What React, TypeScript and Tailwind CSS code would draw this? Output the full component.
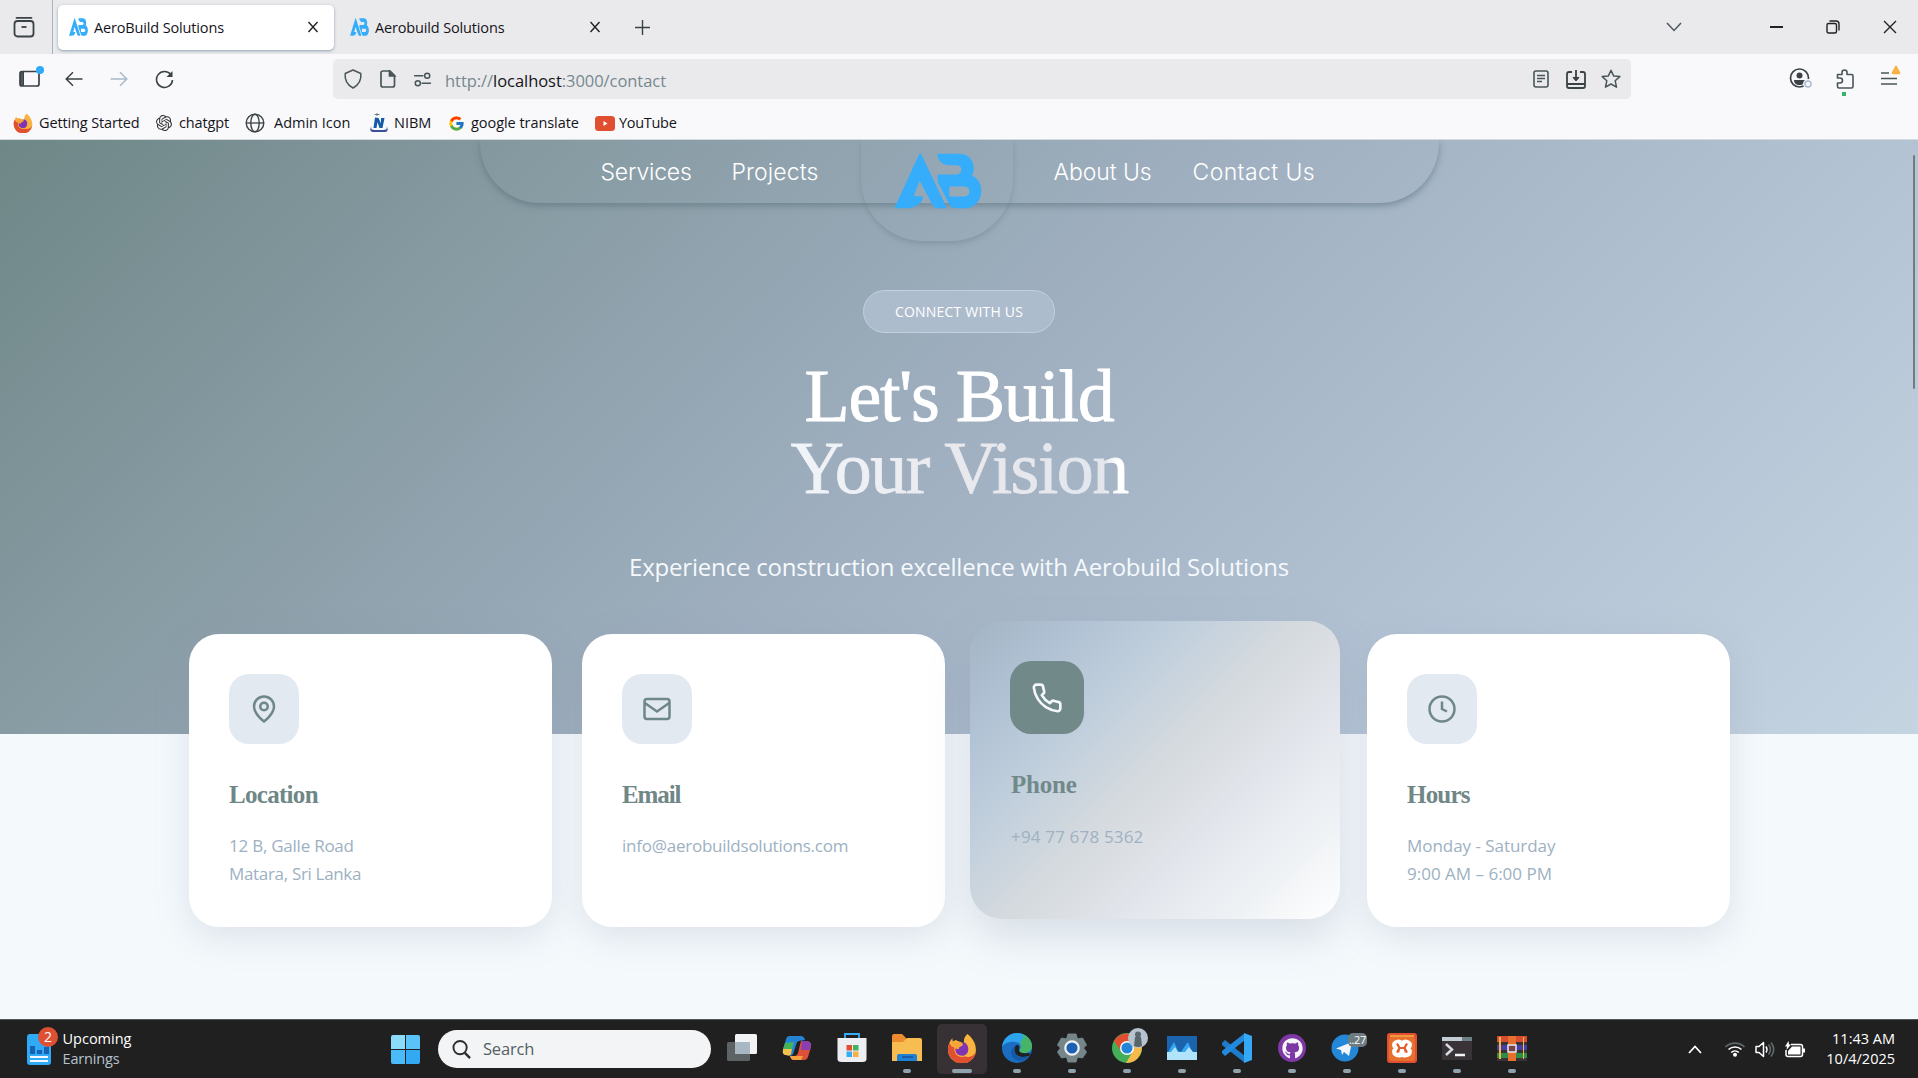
import type { ReactNode } from "react";
import { SiOpenai } from "react-icons/si";
import { FcGoogle } from "react-icons/fc";
import { FaGithub } from "react-icons/fa";

function BrandMark({ className }: { className: string }) {
  return (
    <svg viewBox="1274 56 264 166" preserveAspectRatio="none" className={className} fill="#36adfb">
      <path d="M1351 57 L1276 217 Q1276 220 1280 220 H1312 C1340 218 1361 204 1361 184 H1333 L1351 138 L1387 206 C1393 217 1400 220 1410 220 H1430 Q1433 219 1431 215 L1357 62 Q1354 57 1351 57Z" />
      <path
        fillRule="evenodd"
        d="M1404 58 H1470 C1500 58 1513 80 1513 102 C1513 113 1511 118 1507 122 C1525 130 1536 146 1536 168 C1536 198 1515 220 1486 220 H1460 C1450 220 1444 216 1440 208 L1405 142 V120 H1462 Q1476 119 1476 106 Q1476 92 1462 92 H1440 C1418 92 1404 76 1404 58Z M1440 155 V185 H1484 Q1500 184 1500 170 Q1500 155 1484 155Z"
      />
    </svg>
  );
}

function FirefoxLogo({ className }: { className: string }) {
  return (
    <svg viewBox="0 0 28 28" className={className}>
      <path d="M19 1 C23 4 27 9 27 16 A13 12.4 0 0 1 1 16 C1 11 3 7 5 5 C5 7 5.500 8 6 8 C8 6 9 7 11 8 C13 8 15 10 16 9 C15 6 17 3 19 1Z" fill="#f9b440" />
      <path d="M1 14 A13 13 0 0 0 27 17 C25 22 20 23 17 22 C10 24 6 19 7 13 C5 13 3 12 3 9 C2 10 1 12 1 14Z" fill="#e1502f" />
      <path d="M8 14 C9 10 12 9 17 9 C21 12 21 19 16 21 C11 22 7 19 8 14Z" fill="#8033b3" />
      <path d="M4 7 C7 9 10 8 15 10 C15 13 11 12 11 15 C7 15 4 12 4 7Z" fill="#f7a53a" />
    </svg>
  );
}

function TabItem({ title, active, className }: { title: string; active?: boolean; className: string }) {
  return (
    <div
      className={`flex h-[45px] items-center rounded-[5px] pl-[11px] ${active ? "bg-white shadow-[0_1px_3px_rgba(110,135,155,0.75)]" : ""} ${className}`}
    >
      <BrandMark className="h-[18px] w-[19px]" />
      <span className="ml-[6px] flex-1 whitespace-nowrap pt-px text-[14.5px] tracking-[-0.15px] text-[#15141a]">{title}</span>
      <svg viewBox="0 0 12 12" className="mr-[15px] size-3 stroke-[#222] stroke-[1.4]">
        <path d="M1.500 1 10.500 11 M10.500 1 1.500 11" />
      </svg>
    </div>
  );
}

function TabStrip() {
  return (
    <header className="flex h-[54px] items-center bg-[#eaeaec]">
      <div className="flex h-full w-[53px] items-center justify-center border-r border-[#a8b5c0] pr-1">
        <svg viewBox="0 0 22 22" className="size-[22px] fill-none stroke-[#3b4246] stroke-[1.8]">
          <path d="M3.500 1.800h15" strokeLinecap="round" />
          <rect x="1.500" y="5" width="19" height="15.500" rx="3" />
          <path d="M8.500 11h5" />
        </svg>
      </div>
      <TabItem title="AeroBuild Solutions" active className="ml-[5px] w-[276px]" />
      <TabItem title="Aerobuild Solutions" className="ml-[5px] w-[277px]" />
      <svg viewBox="0 0 14 14" className="ml-[19px] size-[15px] stroke-[#3b4246] stroke-[1.3]">
        <path d="M7 0v14M0 7h14" />
      </svg>
      <div className="flex-1" />
      <svg viewBox="0 0 16 10" className="mr-[88px] h-[10px] w-4 fill-none stroke-[#4c5a60] stroke-[1.5]">
        <path d="M1 1l7 7.500L15 1" />
      </svg>
      <div className="mr-[43px] h-[1.500px] w-[13px] bg-[#222]" />
      <svg viewBox="0 0 14 14" className="mr-[43px] size-[14px] fill-none stroke-[#222] stroke-[1.4]">
        <rect x="1" y="3.500" width="9.500" height="9.500" rx="1.500" />
        <path d="M3.500 1h6.500q3 0 3 3v6.500" />
      </svg>
      <svg viewBox="0 0 14 14" className="mr-[21px] size-[14px] stroke-[#222] stroke-[1.4]">
        <path d="M1 1l12 12M13 1L1 13" />
      </svg>
    </header>
  );
}

function AddressBar() {
  return (
    <div className="flex h-[40px] w-[1298px] items-center rounded-[5px] bg-[#eaeaec] pl-[10px] pr-[10px] text-[#4a5558]">
      <svg viewBox="0 0 20 20" className="h-5 w-5 fill-none stroke-current stroke-[1.5]">
        <path d="M10 1 L17.800 4.500 C18.500 11 15.500 16 10 19 C4.500 16 1.500 11 2.200 4.500Z" strokeLinejoin="round" />
      </svg>
      <svg viewBox="0 0 18 18" className="ml-4 h-[18px] w-[18px] fill-none stroke-current stroke-[1.7]">
        <path d="M11 1H4Q2 1 2 3v12q0 2 2 2h9.500q2 0 2-2V5.500Z" />
        <path d="M10.500 1v5h5z" fill="currentColor" />
      </svg>
      <svg viewBox="0 0 20 16" className="ml-[16px] h-[15px] w-[19px] fill-none stroke-current stroke-[1.6]">
        <path d="M1 4h10M9 12h10" />
        <circle cx="15" cy="4" r="2.700" />
        <circle cx="5" cy="12" r="2.700" />
      </svg>
      <p className="ml-[13px] flex-1 pt-[3px] text-[16.5px] leading-5 tracking-[-0.05px] text-[#76888e]">
        http://<span className="text-[#15141a]">localhost</span>:3000/contact
      </p>
      <svg viewBox="0 0 16 18" className="h-[18px] w-4 fill-none stroke-current stroke-[1.6]">
        <rect x="1" y="1" width="14" height="16" rx="2" />
        <path d="M4 5.500h8M4 8.500h8M4 11.500h5" strokeWidth="1.300" />
      </svg>
      <svg viewBox="0 0 20 19" className="ml-[17px] h-[19px] w-5 fill-none stroke-[#3a4245] stroke-[1.8]">
        <path d="M6 2H3Q1 2 1 4v12q0 2 2 2h14q2 0 2-2V4q0-2-2-2h-3M1 14h18M10 0v9" />
        <path d="M7 7.500h6l-3 3.500z" fill="#3a4245" strokeWidth="1" />
      </svg>
      <svg viewBox="0 0 20 20" className="ml-[15px] h-5 w-5 fill-none stroke-current stroke-[1.5]" strokeLinejoin="round">
        <path d="M10 1.200l2.600 5.700 6.200.7-4.600 4.200 1.300 6.400L10 15l-5.500 3.200 1.300-6.400L1.200 7.600l6.200-.7z" />
      </svg>
    </div>
  );
}

function Toolbar() {
  return (
    <div className="flex h-[50px] items-center text-[#3b4246]">
      <div className="relative ml-[19px] h-[18px] w-[21px]">
        <svg viewBox="0 0 21 18" className="h-full w-full fill-none stroke-current stroke-[1.7]">
          <rect x="1" y="1.500" width="19" height="14.500" rx="2" />
          <path d="M1.500 2h3v13.500h-3z" fill="#4f5a5f" strokeWidth="1" />
        </svg>
        <span className="absolute -right-[4px] -top-[4px] size-2 rounded-full bg-[#2eaaf8]" />
      </div>
      <svg viewBox="0 0 18 16" className="ml-[25px] h-4 w-[18px] fill-none stroke-current stroke-[1.5]">
        <path d="M17.500 8H1.500M8 1.200L1.200 8 8 14.800" />
      </svg>
      <svg viewBox="0 0 18 16" className="ml-[27px] h-4 w-[18px] fill-none stroke-[#a9b9c8] stroke-[1.5]">
        <path d="M.5 8h16M10 1.200L16.800 8 10 14.800" />
      </svg>
      <svg viewBox="0 0 19 19" className="ml-[27px] h-[19px] w-[19px] fill-none stroke-current stroke-[1.6]">
        <path d="M16 4.800A8 8 0 1 0 17.500 10" />
        <path d="M17.500 1v6h-6z" fill="currentColor" stroke="none" />
      </svg>
      <div className="ml-[159px]">
        <AddressBar />
      </div>
      <div className="flex-1" />
      <svg viewBox="0 0 24 22" className="mr-[23px] h-[22px] w-6">
        <circle cx="10.500" cy="10" r="9" fill="none" stroke="#3b4246" strokeWidth="1.700" />
        <circle cx="10.500" cy="7.500" r="3" fill="#3b4246" />
        <path d="M5 12h11c0 3-2 5-5.500 5S5 15 5 12z" fill="#3b4246" />
        <circle cx="19" cy="16" r="5" fill="#f9f9fb" />
        <circle cx="19" cy="16" r="3" fill="none" stroke="#aabbd0" strokeWidth="1.500" />
      </svg>
      <div className="relative mr-[27px] h-5 w-[18px]">
        <svg viewBox="0 0 18 20" className="h-full w-full fill-none stroke-[#4a5558] stroke-[1.6]" strokeLinejoin="round">
          <path d="M1.500 5.500H6V3.500a2.500 2.500 0 0 1 5 0v2h4.500q1.500 0 1.500 1.500v10.500q0 1.500-1.500 1.500H3q-1.500 0-1.500-1.500V14H4a2.200 2.200 0 0 0 0-5H1.500z" />
        </svg>
        <span className="absolute left-[6px] top-[23px] h-1 w-1 bg-[#35b46a]" />
      </div>
      <div className="relative mr-[21px] h-5 w-4">
        <svg viewBox="0 0 16 20" className="h-full w-full stroke-[#4a5558] stroke-[1.6]">
          <path d="M0 4h8M0 9.500h16M0 15h16" />
        </svg>
        <svg viewBox="0 0 12 10" className="absolute -right-[4px] -top-[4px] h-[10px] w-[10px]">
          <path d="M6 0q1 0 1.500 1L11 8q.8 2-1 2H2q-1.800 0-1-2L4.500 1Q5 0 6 0z" fill="#f7b243" />
        </svg>
      </div>
    </div>
  );
}

function Bookmarks() {
  return (
    <div className="flex h-[35px] items-center whitespace-nowrap pl-[13px] pt-[3px] text-[14.5px] text-[#15141a]">
      <FirefoxLogo className="mr-[6px] size-5" />
      <span className="w-[117px] tracking-[-0.13px]">Getting Started</span>
      <SiOpenai className="mr-[7px] size-[16px] text-[#333]" />
      <span className="w-[66px] tracking-[-0.13px]">chatgpt</span>
      <svg viewBox="0 0 20 20" className="mr-[9px] size-5 fill-none stroke-[#3b4246] stroke-[1.4]">
        <circle cx="10" cy="10" r="8.800" />
        <ellipse cx="10" cy="10" rx="4.200" ry="8.800" />
        <path d="M1 10h18" strokeWidth="1.300" />
      </svg>
      <span className="w-[95px]">Admin Icon</span>
      <svg viewBox="0 0 20 20" className="mr-[5px] size-5">
        <path d="M6 4.500l3.500.5 2.500 5.500V5h3.500l-2 10h-3L8.500 9l-1 6H4.500z" fill="#1559a8" />
        <path d="M2.500 13q-1.500 4 3 4h9q4.500 0 3-4q3.500 6-3 6h-9q-6.500 0-3-6z" fill="#3b4f9a" />
        <path d="M8 0v3M5.500 1.500h5" stroke="#66808a" />
      </svg>
      <span className="w-[54px]">NIBM</span>
      <FcGoogle className="mr-[6px] size-[17px]" />
      <span className="w-[124px] tracking-[-0.05px]">google translate</span>
      <svg viewBox="0 0 20 15" className="mr-[4px] h-[15px] w-5">
        <rect width="20" height="15" rx="3.500" fill="#df4f30" />
        <path d="M8.500 5l4 2.500-4 2.500z" fill="#fff" />
      </svg>
      <span className="tracking-[-0.3px]">YouTube</span>
    </div>
  );
}

function NavBar() {
  return (
    <nav className="relative mx-auto flex h-[63px] w-[959px] rounded-b-[60px] text-left text-[23px] font-light leading-[64px] text-white shadow-[0_3px_6px_rgba(80,105,115,0.5)] [clip-path:inset(0_-20px_-60px_-20px)] font-['Inter',sans-serif]">
      <a className="ml-[121px] w-[131px] tracking-[-0.2px]">Services</a>
      <a className="w-[322px] tracking-[0.12px]">Projects</a>
      <a className="w-[139px] tracking-[-0.07px]">About Us</a>
      <a className="whitespace-nowrap tracking-[0.4px]">Contact Us</a>
      <div className="absolute left-[381px] top-0 h-[101px] w-[152px] rounded-b-[62px] shadow-[0_3px_5px_rgba(100,120,130,0.35)]">
        <BrandMark className="ml-[33px] mt-[13px] h-[56px] w-[88px]" />
      </div>
    </nav>
  );
}

function Hero() {
  return (
    <section className="h-[594px] bg-[linear-gradient(135deg,#6f8787_0%,#889ca4_24%,#9fafc0_49%,#b3c3d4_76%,#c5d4e1_100%)] text-center text-white">
      <NavBar />
      <div className="mx-auto mt-[87px] h-[43px] w-[192px] rounded-full border border-[#c3d0de] bg-[#adbccd] text-[14px] font-medium leading-[41px] tracking-[0.2px]">
        CONNECT WITH US
      </div>
      <h1 className="mt-[27px] font-['Liberation_Serif',serif] text-[74px] leading-[72px]">
        <span className="block tracking-[-1.35px] [-webkit-text-stroke:0.8px_white]">Let&apos;s Build</span>
        <span className="mx-auto block w-[343px] whitespace-nowrap bg-[linear-gradient(90deg,#f0f5f9_0%,#e9e9ed_50%,#e3e6ed_92%,#ffffff_96%)] bg-clip-text tracking-[-1.6px] text-transparent [-webkit-text-stroke:0.8px_transparent]">
          Your Vision
        </span>
      </h1>
      <p className="mt-[45px] text-[24px] leading-[36px] tracking-[-0.2px] text-[#f5f9fc]">
        Experience construction excellence with Aerobuild Solutions
      </p>
    </section>
  );
}

function InfoCard({ icon, title, titleClass, children }: { icon: ReactNode; title: string; titleClass: string; children: ReactNode }) {
  return (
    <article className="h-[293px] w-[363px] rounded-[30px] bg-white pl-10 pt-10 shadow-[0_10px_35px_rgba(130,140,165,0.2)]">
      <div className="flex size-[70px] items-center justify-center rounded-[20px] bg-[#e2e9f1]">{icon}</div>
      <h3 className={`mt-[36px] font-['Liberation_Serif',serif] text-[25px] font-bold leading-[30px] text-[#6f8786] ${titleClass}`}>{title}</h3>
      <div className="mt-[22px] text-[17px] leading-[28px] text-[#9db1c2]">{children}</div>
    </article>
  );
}

const lineIcon = "size-[30px] fill-none stroke-[#6f8786] stroke-2";

function ContactCards() {
  return (
    <section className="relative -mt-[100px] flex items-start pl-[189px]">
      <InfoCard
        title="Location"
        titleClass="tracking-[-0.7px]"
        icon={
          <svg viewBox="0 0 24 24" className={lineIcon} strokeLinejoin="round">
            <path d="M20 10c0 6-8 12-8 12s-8-6-8-12a8 8 0 0 1 16 0Z" />
            <circle cx="12" cy="10" r="3" />
          </svg>
        }
      >
        <p className="tracking-[-0.24px]">12 B, Galle Road</p>
        <p className="tracking-[-0.32px]">Matara, Sri Lanka</p>
      </InfoCard>
      <div className="ml-[30px]">
        <InfoCard
          title="Email"
          titleClass="tracking-[-1.1px]"
          icon={
            <svg viewBox="0 0 24 24" className={lineIcon} strokeLinejoin="round">
              <rect x="2" y="4" width="20" height="16" rx="2" />
              <path d="M2 7l10 7 10-7" />
            </svg>
          }
        >
          <p className="tracking-[-0.24px]">info@aerobuildsolutions.com</p>
        </InfoCard>
      </div>
      <article className="-mt-[13px] ml-[25px] h-[298px] w-[370px] rounded-[32px] bg-[linear-gradient(135deg,#a3b4c5_0%,#b2c3d5_18%,#c2d0dd_34%,#d5dade_50%,#e3e6ec_68%,#eff2f5_84%,#ffffff_100%)] pl-10 pt-10 shadow-[0_18px_40px_rgba(135,145,170,0.26)]">
        <div className="flex h-[73px] w-[74px] items-center justify-center rounded-[21px] bg-[#72898a]">
          <svg viewBox="0 0 24 24" className="size-[32px] fill-none stroke-[#f4f7fc] stroke-2" strokeLinejoin="round">
            <path d="M22 16.920v3a2 2 0 0 1-2.180 2 19.790 19.790 0 0 1-8.630-3.070 19.500 19.500 0 0 1-6-6 19.790 19.790 0 0 1-3.070-8.670A2 2 0 0 1 4.110 2h3a2 2 0 0 1 2 1.720 12.840 12.840 0 0 0 .7 2.810 2 2 0 0 1-.45 2.110L8.090 9.910a16 16 0 0 0 6 6l1.270-1.270a2 2 0 0 1 2.110-.45 12.840 12.840 0 0 0 2.810.7A2 2 0 0 1 22 16.920z" />
          </svg>
        </div>
        <h3 className="mt-[36px] pl-[1px] font-['Liberation_Serif',serif] text-[25px] font-bold leading-[30px] tracking-[-0.2px] text-[#72898a]">Phone</h3>
        <p className="mt-[23px] pl-[1px] text-[17px] leading-[28px] tracking-[0.17px] text-[#9fb1c3]">+94 77 678 5362</p>
      </article>
      <div className="ml-[27px]">
        <InfoCard
          title="Hours"
          titleClass="tracking-[-0.8px]"
          icon={
            <svg viewBox="0 0 24 24" className={lineIcon}>
              <circle cx="12" cy="12" r="10" />
              <path d="M12 6v6l4 2" />
            </svg>
          }
        >
          <p className="tracking-[-0.04px]">Monday - Saturday</p>
          <p>9:00 AM – 6:00 PM</p>
        </InfoCard>
      </div>
    </section>
  );
}

function TaskItem({ children, running, active }: { children: ReactNode; running?: boolean; active?: boolean }) {
  return (
    <div className="flex h-full w-[55px] justify-center pt-[4px]">
      <div className={`flex h-[50px] w-[50px] flex-col items-center rounded-[5px] ${active ? "bg-[#373035]" : ""}`}>
        <div className="relative flex h-[45px] w-[32px] items-center justify-center pt-[3px]">{children}</div>
        {running && <div className={`h-1 shrink-0 rounded-full bg-[#8fa2ad] ${active ? "w-5" : "w-2"}`} />}
      </div>
    </div>
  );
}

const ico = "h-[30px] w-[30px] shrink-0";

function TaskIcons() {
  return (
    <div className="ml-[3.500px] flex h-full">
      <TaskItem>
        <svg viewBox="0 0 30 28" className={ico}>
          <rect x="0" y="8" width="23" height="19" rx="1.500" fill="#5d6265" />
          <rect x="8" y="0" width="22" height="20" rx="1.500" fill="#f1f3f5" />
          <rect x="8" y="8" width="15" height="12" fill="#a9b7c5" />
        </svg>
      </TaskItem>
      <TaskItem>
        <svg viewBox="0 0 30 28" className={ico}>
          <path d="M7 2h12q3 0 4 4l-6 1q-2 0-3 4l-3 9q-1 3-5 1H3q-3-1-2-5L4 5q1-3 3-3z" fill="#2583d4" />
          <path d="M3 9l9-1-2 7H1z" fill="#43b35c" />
          <path d="M1 15h9l-1 5q-1 3-5 1H3q-3-1-2-5z" fill="#f7c248" />
          <path d="M19 7h6q5 1 4 6l-3 10q-1 3-4 3H12q-3 0-4-4h4q3 0 4-3z" fill="#de5038" />
          <path d="M20 7h5q5 1 4 5l-1 4h-9z" fill="#8a3fb0" />
          <path d="M8 22h13l-2 4h-7q-3 0-4-4z" fill="#f5a142" />
        </svg>
      </TaskItem>
      <TaskItem>
        <svg viewBox="0 0 30 30" className={ico}>
          <path d="M8 6V1h14v5" fill="none" stroke="#36adfb" strokeWidth="1.800" />
          <path d="M.5 5h29v21q0 3-4 3h-21q-4 0-4-3z" fill="#eceef2" />
          <path d="M9.500 12h5.500v5.500H9.500z" fill="#df4f30" />
          <path d="M16 12h5.500v5.500H16z" fill="#47b25c" />
          <path d="M9.500 18.500h5.500V24H9.500z" fill="#36adfb" />
          <path d="M16 18.500h5.500V24H16z" fill="#f5b143" />
        </svg>
      </TaskItem>
      <TaskItem running>
        <svg viewBox="0 0 30 28" className={ico}>
          <path d="M0 2q0-2 2-2h8l4 4v5H0z" fill="#ec8b30" />
          <path d="M0 8h11l4-4h13q2 0 2 2v21H0z" fill="#f8bd50" />
          <path d="M5 27v-5q0-2 2-2h16q2 0 2 2v5z" fill="#1e82d4" />
          <path d="M10 22h11v2H10z" fill="#175fae" />
        </svg>
      </TaskItem>
      <TaskItem running active>
        <FirefoxLogo className={ico} />
      </TaskItem>
      <TaskItem running>
        <svg viewBox="0 0 30 30" className={ico}>
          <circle cx="15" cy="15" r="15" fill="#1b6dc2" />
          <path d="M0 14C1 5 8 0 15 0c9 0 15 7 15 13 0 5-4 7-8 7-5 0-5-2-4-3 2-5-1-8-5-8C7 8 2 11 0 14z" fill="#2ea3ee" />
          <path d="M20 1c6 2 10 7 10 12 0 5-4 7-8 7-5 0-5-2-4-3 2-4 1-6 0-8 3-2 4-5 2-8z" fill="#46b566" />
          <path d="M14 12c-4 5-1 12 7 12 3 0 6-1 7-2l2 1-3-3c-5 1-11 0-10-4 1-3 0-4-3-4z" fill="#202020" />
          <path d="M14 12c-3 5-1 12 7 12 3 0 5-1 6-1-5 7-14 6-17 0-2-5 0-9 4-11z" fill="#155aa8" />
        </svg>
      </TaskItem>
      <TaskItem running>
        <svg viewBox="0 0 30 30" className={ico}>
          <path d="M11 1h8l1.500 5 5-1 4 7-3 3 3 4-4 6-5-1-1.500 5h-8L9.500 24l-5 1-4-6 3-4-3-3 4-7 5 1z" fill="#75858a" stroke="#75858a" strokeLinejoin="round" />
          <circle cx="15" cy="15" r="6.700" fill="#1d61b2" stroke="#f0f2f5" strokeWidth="2.200" />
        </svg>
      </TaskItem>
      <TaskItem running>
        <svg viewBox="0 0 30 30" className={ico}>
          <circle cx="15" cy="15" r="15" fill="#45ae59" />
          <path d="M2 8A15 15 0 0 1 28 8L15 9 9 18z" fill="#df4f30" />
          <path d="M15 8h13a15 15 0 0 1-14 22l7-12z" fill="#f7b84c" />
          <circle cx="15" cy="15" r="7" fill="#fff" />
          <circle cx="15" cy="15" r="5.600" fill="#2286d8" />
        </svg>
        <svg viewBox="0 0 20 20" className="absolute -right-[5px] top-[4px] size-5">
          <circle cx="10" cy="10" r="10" fill="#b7c4cf" />
          <circle cx="10" cy="6.500" r="3" fill="#5b676d" />
          <path d="M7 9h6l1 9q-4 2-8 0z" fill="#59666b" />
        </svg>
      </TaskItem>
      <TaskItem running>
        <svg viewBox="0 0 30 24" className="h-6 w-[30px] shrink-0">
          <path d="M0 0h30v24H0z" fill="#1c63ae" />
          <path d="M0 18L4 11l3-5 4 9 3 1 4-6 3-4 4 10 5 2v6H0z" fill="#35a7f2" />
          <path d="M0 16l4 0 4-5 3 5 7 0 4-5 4 5 4 0v8H0z" fill="#b1e3fb" />
        </svg>
      </TaskItem>
      <TaskItem running>
        <svg viewBox="0 0 30 30" className={ico}>
          <path d="M0 10l3-3L23 23v7L0 12z" fill="#1d7bc9" />
          <path d="M0 20l3 3L23 7V0L0 18z" fill="#2389dc" />
          <path d="M22 0l8 3v24l-8 3z" fill="#36a9f6" />
        </svg>
      </TaskItem>
      <TaskItem running>
        <div className="flex size-7 shrink-0 items-center justify-center rounded-full bg-[#7d38a5]">
          <FaGithub className="size-[21px] text-[#f5f5f8]" />
        </div>
      </TaskItem>
      <TaskItem running>
        <svg viewBox="0 0 28 28" className="mr-1 size-7 shrink-0">
          <circle cx="14" cy="14" r="13.500" fill="#2388d8" />
          <path d="M5 14.500L21 8l-3 14-5-4-2 3-1-5z" fill="#f4f7fa" />
        </svg>
        <span className="absolute left-[17px] top-[9px] h-[14px] w-[19px] rounded-[5px] bg-[#6d7c80] text-center text-[11px] leading-[14px] tracking-[-0.3px] text-white">..27</span>
      </TaskItem>
      <TaskItem running>
        <svg viewBox="0 0 30 30" className={ico}>
          <rect width="30" height="30" rx="3" fill="#df4f30" />
          <rect x="2" y="4" width="26" height="24" rx="3" fill="#e7702f" />
          <path d="M3 3h24" stroke="#f7b243" strokeWidth="1.500" />
          <path d="M9.500 9.500q5.500-2 5.500 5.500 0-7.500 5.500-5.500 4 2 0 5.500 4 4 0 6.500-5.500 2-5.500-3 0 5-5.500 3-4-2.500 0-6.500-4-3.500 0-5.500z" fill="none" stroke="#fff" strokeWidth="5" strokeLinejoin="round" />
          <path d="M10 10.500l2.500 4.500L10 19.500M20 10.500L17.500 15l2.500 4.500M12.500 15h5" fill="none" stroke="#e3602c" strokeWidth="2.200" />
        </svg>
      </TaskItem>
      <TaskItem running>
        <svg viewBox="0 0 30 23" className="h-[23px] w-[30px] shrink-0">
          <path d="M0 0h30v23H0z" fill="#393338" />
          <path d="M0 0h20v4H0z" fill="#c4ccd4" />
          <path d="M20 0h10v4H20z" fill="#6f8086" />
          <path d="M4 7l6 5.500L4 18" fill="none" stroke="#d6dbe1" strokeWidth="2.500" />
          <path d="M13 18h10" stroke="#f4f4f4" strokeWidth="2.500" />
        </svg>
      </TaskItem>
      <TaskItem running>
        <svg viewBox="0 0 30 25" className="h-[25px] w-[30px] shrink-0">
          <path d="M0 0h30v8H0z" fill="#d84c31" />
          <path d="M0 9h30v7H0z" fill="#433fa5" />
          <path d="M0 17h30v8H0z" fill="#2c8c48" />
          <path d="M0 6h30v3H0zM0 14h30v3H0zM0 22h30v3H0z" fill="#393338" />
          <path d="M11 0h8v25h-8z" fill="#e7702f" />
          <path d="M2 1h2v22H2zM26 1h1v22h-1z" fill="#f7b84c" />
          <rect x="11" y="9" width="8" height="7" fill="#76454b" stroke="#e7e9ee" strokeWidth="1.500" />
        </svg>
      </TaskItem>
    </div>
  );
}

function Taskbar() {
  return (
    <footer className="flex h-[59px] items-center border-t border-[#50565a] bg-[#202020]">
      <div className="relative ml-[27px] h-[31px] w-6">
        <svg viewBox="0 0 24 31" className="h-full w-full">
          <rect width="24" height="31" rx="3" fill="#2eaaf6" />
          <path d="M3 12h5v8H3zM10 16h5v4h-5zM17 13h5v7h-5z" fill="#1762b1" />
          <path d="M3 23h18M3 27h18" stroke="#f1f8ff" strokeWidth="1.800" />
        </svg>
        <span className="absolute -top-[7px] left-[11px] size-5 rounded-full bg-[#dd5033] text-center text-[14px] leading-5 text-white">2</span>
      </div>
      <div className="ml-[11.500px] w-[328.500px] text-[14.5px] leading-[20px]">
        <p className="text-white">Upcoming</p>
        <p className="tracking-[-0.15px] text-[#b5c3ce]">Earnings</p>
      </div>
      <div className="grid size-[29px] grid-cols-2 gap-px overflow-hidden rounded-[2px]">
        <div className="bg-[#8bdcfb]" />
        <div className="bg-[#5ac3fa]" />
        <div className="bg-[#4abbf9]" />
        <div className="bg-[#33a8f3]" />
      </div>
      <div className="ml-[18px] flex h-[38px] w-[273px] items-center rounded-full bg-[#f2f4f6] pl-[14px]">
        <svg viewBox="0 0 20 20" className="size-[19px] fill-none stroke-[#292d2f] stroke-2">
          <circle cx="8.500" cy="8" r="7" />
          <path d="M13.500 13.500L19 19" strokeWidth="2.500" />
        </svg>
        <span className="ml-[12px] pt-px text-[16.5px] tracking-[-0.2px] text-[#545f63]">Search</span>
      </div>
      <TaskIcons />
      <div className="flex-1" />
      <svg viewBox="0 0 14 9" className="mr-[23px] h-[9px] w-[14px] fill-none stroke-white stroke-[1.8]">
        <path d="M1 8l6-6.500L13 8" />
      </svg>
      <svg viewBox="0 0 20 16" className="mr-[10px] h-4 w-5 fill-none stroke-white stroke-[1.6]">
        <path d="M.5 6a13.500 13.500 0 0 1 19 0" stroke="#5f6669" />
        <path d="M3.500 8.500a9.500 9.500 0 0 1 13 0M6.200 11.500a5.500 5.500 0 0 1 7.600 0" />
        <circle cx="10" cy="13.800" r="1.200" fill="#fff" />
      </svg>
      <svg viewBox="0 0 20 17" className="mr-[10px] h-[17px] w-5 fill-none stroke-white stroke-[1.5]">
        <path d="M1 5.500h3L8.500 1.500v14L4 11.500H1z" strokeLinejoin="round" />
        <path d="M11 5.500q2 3 0 6" />
        <path d="M13.500 3.500q4 5 0 10M16 1.500q5.500 7 0 14" stroke="#656c6f" />
      </svg>
      <svg viewBox="0 0 20 17" className="mr-[21px] h-[17px] w-5">
        <path d="M6 3.500h9.500q2 0 2 2v8q0 2-2 2H3q-2 0-2-2V9" fill="none" stroke="#fff" strokeWidth="1.500" />
        <path d="M7 5.500h8.500v8H3V10z" fill="#fff" />
        <path d="M18 7.500h2v4h-2zM3.500 0L0 5.500h2L1.500 9 6 3.500H4z" fill="#fff" />
      </svg>
      <div className="mr-[23px] text-right text-[14.5px] leading-[20px] text-white">
        <p>11:43 AM</p>
        <p>10/4/2025</p>
      </div>
    </footer>
  );
}

export default function App() {
  return (
    <div className="flex h-[1078px] w-[1918px] flex-col overflow-hidden bg-[#f9f9fb] font-['Open_Sans',sans-serif]">
      <TabStrip />
      <Toolbar />
      <Bookmarks />
      <div className="h-px bg-[#d3dbe1]" />
      <main className="relative h-[879px] overflow-hidden bg-[#f4f9fc]">
        <Hero />
        <ContactCards />
        <div className="absolute right-[3px] top-[15px] h-[234px] w-[2px] rounded-full bg-[#6d8080]" />
      </main>
      <Taskbar />
    </div>
  );
}
